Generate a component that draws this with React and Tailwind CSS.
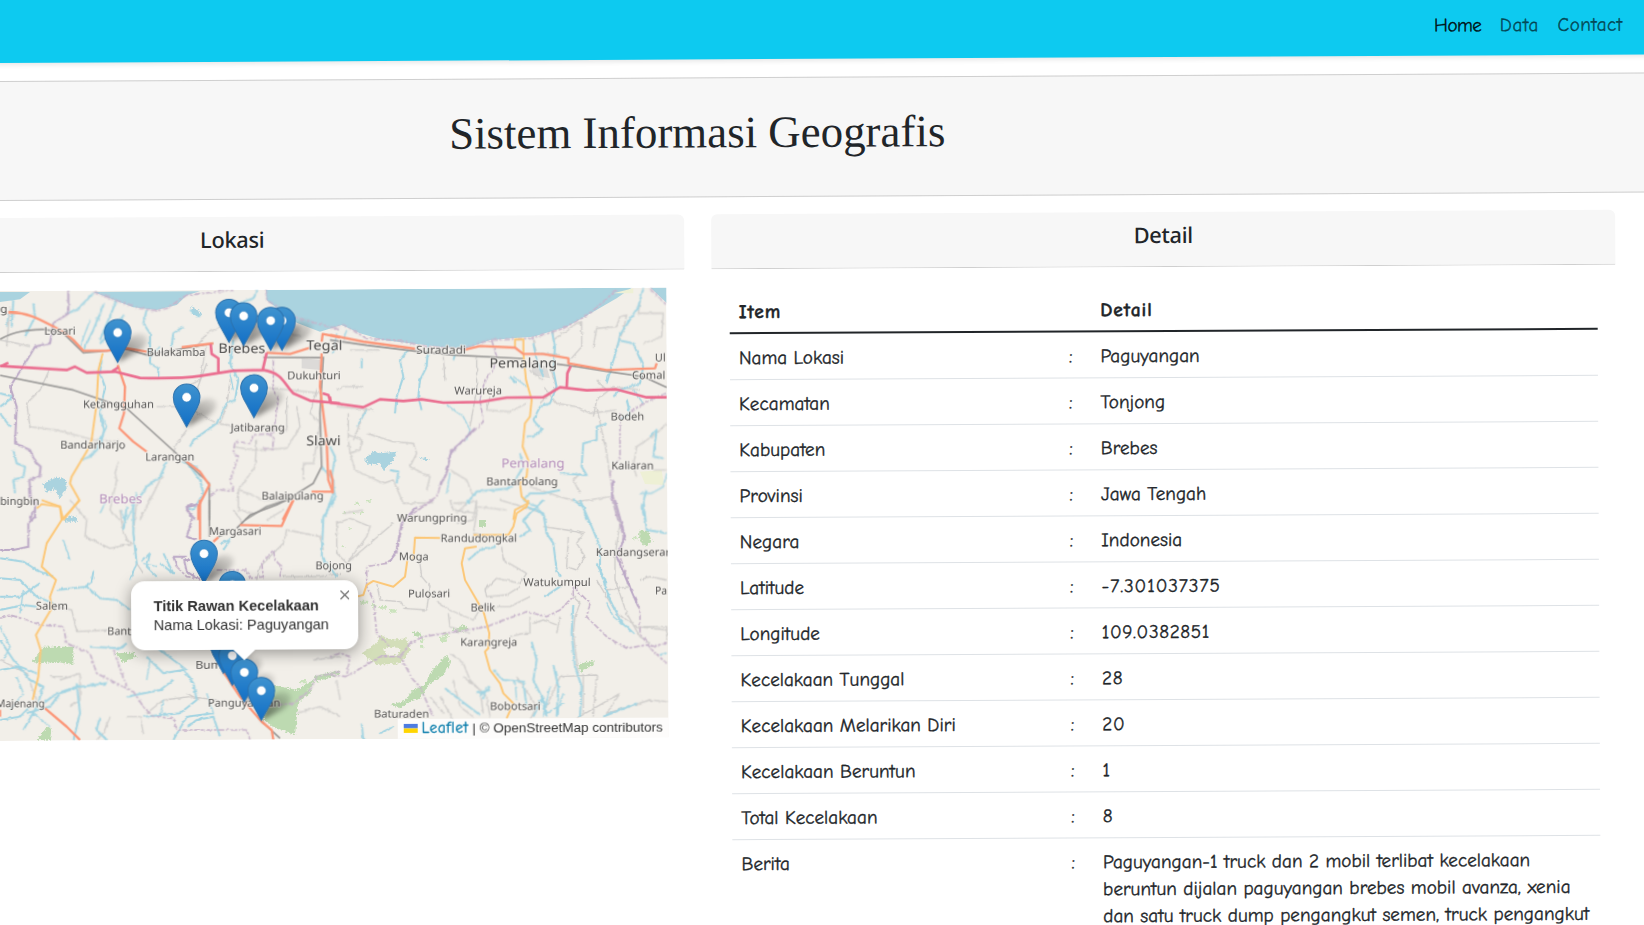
import React from "react";

const INK = "text-[#212529]";
const CASUAL_FONT = "font-['Comic_Sans_MS','Comic_Neue',cursive,sans-serif]";
const CASUAL = `${CASUAL_FONT} text-[19.2px] [-webkit-text-stroke:0.35px_currentColor]`;

const ROWS = [
  ["Nama Lokasi", "Paguyangan"],
  ["Kecamatan", "Tonjong"],
  ["Kabupaten", "Brebes"],
  ["Provinsi", "Jawa Tengah"],
  ["Negara", "Indonesia"],
  ["Latitude", "-7.301037375", "tracking-[0.9px]"],
  ["Longitude", "109.0382851", "tracking-[0.6px]"],
  ["Kecelakaan Tunggal", "28", "tracking-[0.6px]"],
  ["Kecelakaan Melarikan Diri", "20", "tracking-[0.6px]"],
  ["Kecelakaan Beruntun", "1"],
  ["Total Kecelakaan", "8"],
];

const NEWS = [
  "Paguyangan-1 truck dan 2 mobil terlibat kecelakaan",
  "beruntun dijalan paguyangan brebes mobil avanza, xenia",
  "dan satu truck dump pengangkut semen, truck pengangkut",
];

/* Line styles of the map: colour, width, dash */
const KINDS = {
  minor: ["#cfcdcb", 4, null],
  rail: ["#979695", 5, null],
  river: ["#a3d4e2", 6, null],
  thin: ["#a3d4e2", 4, null],
  border: ["#c6b3ca", 5, "18 5 8 5"],
  edge: ["#bba8c6", 6, null],
  second: ["#fcc777", 6, null],
  trunk: ["#fb9678", 7, null],
  toll: ["#ea6d8f", 8, null],
};

const NATURAL = ["minor", "river", "thin", "border", "edge"];

const NW = [
  ["minor", "M20 200L30 80M150 265L120 330 80 370 90 440 170 450 280 480 360 485M590 200L620 160 680 130M620 190L600 300 560 320M470 380L560 380 650 430 690 436M800 323L870 330 960 340M700 500L760 510 860 505 900 440 890 380M860 350V450L800 445 690 440M770 480L765 560 715 630 715 690 760 700M560 450L530 490 520 520M355 545L345 580 350 600 330 690 360 720M490 590L480 600 420 720M910 600L910 550 940 550 960 430 930 400 950 330M715 633L745 640 790 660 870 660M0 180L50 190 90 200M620 250L590 330 560 440M690 300L680 380 660 430M840 150L870 160 900 170"],
  ["rail", "M0 178C50 150 90 150 135 148L190 160 250 218 380 208 440 225 640 190M0 286L220 330 380 385 628 610V720M790 232L965 233M735 720L800 680 860 660 940 610 965 560 960 400 970 230"],
  ["river", "M280 40L230 90 200 100M312 70L280 150 250 210M350 60L300 180M372 105L340 150 300 190M440 90L430 130 450 160 450 250 475 265 475 290M305 240L300 280 315 320 300 400 312 450 300 500 270 530 240 540M0 340L40 350 0 380M0 400L30 440M40 510L50 550 75 560 70 590 40 600 45 640M700 180L690 250 715 300 705 360 680 370 650 430 580 480 570 500M770 30L760 55 690 80 650 120M805 55L830 80M500 545L480 590 440 620 420 650M560 545L600 600 610 640 580 690 560 680M965 560L1000 600 1000 640 975 710M40 60L35 140M100 70L105 110 75 170M550 140L520 160 515 200M570 90L600 110"],
  ["thin", "M300 400L320 440 290 500M25 100L20 140M270 120L240 200M690 280L700 330M480 200L450 230M545 545L590 560 600 590M410 640L400 680 380 720M375 720L360 690"],
  ["edge", "M205 30V100L160 130 150 190 105 200 75 250 30 320 50 380 45 490 90 510 105 545 122 560 118 590 88 600 92 650 105 680 90 720"],
  ["border", "M280 36L360 65 420 85 470 92 500 85 560 45 610 40 700 30M798 30L800 60 880 110 1020 150M820 240L820 330 835 360 820 460 760 465 750 490 705 485 700 520 715 530 690 600 700 630 650 630 630 650M800 460L820 470 818 508 790 505"],
  ["edge", "M600 675L565 675 560 690 585 718"],
  ["second", "M308 220L295 270 290 370 275 480 260 515 215 590 210 610 238 660 190 720M110 685L125 672 180 680 190 720"],
  ["trunk", "M25 98C90 95 130 125 190 155L220 180 250 212 320 212 380 205 440 215M353 255L375 320 372 400 358 445 400 485 440 515M545 202L640 190M800 218L870 222 930 203M965 220L960 320 980 480 985 600 998 635 935 635M965 185L968 162 1020 172M560 545L600 575 628 615 595 680V720M880 660L848 720"],
  ["toll", "M0 258L200 270 225 260 260 278 345 275 420 294C520 296 560 294 600 288L700 272 790 270C850 280 850 310 880 340L930 362 1020 370M632 192L635 222 655 235V278M800 218L788 270M0 260L25 248M335 275L355 262M968 340L985 345 992 365"],
];

const NE = [
  ["minor", "M20 380L130 390M20 330L40 320 100 320M55 400V480L60 520 75 570 160 610 190 600 220 670 310 668M110 380L70 480M55 465L95 480 90 510 60 520M110 460L190 485 250 490 260 520 240 560 300 590 290 630M340 230L345 300M440 230V330L420 440M480 350L470 390 540 395 590 370M640 320L680 370 740 380 780 400 860 390M670 150V180L740 130 755 125V200L720 240M790 200L800 145 860 140 870 110 890 105 880 150 860 200M930 65L925 100 1000 100 995 170 940 190M1010 430L980 460 920 500 910 560 920 590M600 620L690 650 740 665 840 650M360 570L410 600 430 650 380 700M370 670L440 665 440 700M440 680L530 690M660 260L680 320 630 370M800 380L830 520 840 590M600 270L640 300M150 210L60 210M40 700L100 690M610 180L620 220 690 225M750 640L730 600 750 580M800 300L830 330M790 410L800 360 850 320 930 330M970 570L1010 570"],
  ["rail", "M0 180L110 196 260 214 370 225 580 236M680 252L740 260 830 274 940 290 1010 322"],
  ["river", "M235 210L210 240 220 290 200 350 195 400M295 190L290 260 270 300 265 350 275 390M95 235V265M940 25L925 80 870 165 865 190 830 310M870 182L910 190 940 260 930 310 870 330 850 350M665 150L675 200 670 270 680 320 660 370 630 380 610 420 635 450 610 470 590 470M830 430L800 440 800 480 760 490 755 560 770 585 690 580M540 290L560 310M610 190L620 240 640 290M890 360L900 400 870 420M960 470L980 450 970 530 1000 535M540 625L440 635 410 670M570 520L580 560 550 610 530 630M690 630L640 640 600 640 580 660 620 680 650 720M180 570L205 575 200 610M770 720L760 680 730 660M950 630L935 680 945 720M375 225L370 240M0 500L15 530 5 590 15 650 5 680"],
  ["thin", "M350 375L400 410 420 450 410 480M110 390L80 440M20 160L10 220M50 150L40 180M550 290L590 320M360 580L350 640M1010 580L1000 620 965 640 930 640M910 330L940 370"],
  ["border", "M0 145L40 135 110 175 210 182 290 200 400 205 480 180 600 175 700 145 780 100 860 30M960 25L1010 75M485 180L500 230 490 270 465 300 450 360 460 425 435 450 390 490 365 510 350 580 330 620 320 650 260 690M1010 340L960 360 900 395M870 400L870 530 840 580 850 650 865 720"],
  ["edge", "M435 445L390 490 362 520 350 580 330 615M850 600L845 650 865 720"],
  ["second", "M555 200V178H580V220L588 300 605 360 600 410 585 430 578 500 595 540 590 590 570 610 575 650 595 670 555 690 550 720"],
  ["trunk", "M0 165L100 185 255 206M400 210L450 198 555 203 580 222 640 222 715 235 715 250 830 270 975 265 980 250M0 570L8 600V640"],
  ["toll", "M0 368L100 382 150 358 220 363 275 358 340 368 450 366 530 353 640 352 690 322 770 331 860 328 950 352H1010M710 325L712 280 722 258M0 350V368"],
];

const SW = [
  ["minor", "M210 0L260 60 255 110 330 145 400 130M360 30L370 100 390 130M410 0L400 100 410 190 430 220M860 90L960 110 970 150M860 90L850 130 780 200 770 240M170 320L215 330 230 395 330 390M800 60L850 30M150 530L200 530M180 540L240 520 240 600 210 620M440 640L490 600 570 590 650 600M330 650L310 700 290 720M0 480L80 520 110 600M380 650L420 650 430 700M560 580L600 600M850 230L960 230 1020 220M940 480L1020 470M890 640L960 620 1020 650M700 30L730 70"],
  ["rail", "M628 0V110M710 85L750 45 830 15 860 0M785 665L840 715M655 110L680 100"],
  ["river", "M0 175L70 185 110 210 160 230M0 235L60 240 110 290 160 310M0 290L60 290 120 250M0 330L70 315 110 320M170 270L260 260 300 295 350 300 390 330M280 215L275 245 250 265M380 20L370 90M400 0L400 100 410 190 390 240M425 185L450 160 440 200 470 230M490 160L520 220 480 190M0 420L40 480 90 540 130 560 110 620 70 690M0 510L60 500 110 520M440 470L490 520 550 510 580 550 590 600 540 640 430 650M80 640L150 620 180 580 240 560 320 550M230 550L240 640 220 720M230 560L170 580 130 610M640 640L560 650 520 720M300 650L290 690 320 720M1000 0L970 50 965 170 1010 230M560 680L590 660 640 650 660 710M270 440L360 445 380 430M440 430L480 450 560 510M0 660L60 650 90 620M380 590L480 570 520 540M660 130L690 120 670 150"],
  ["thin", "M0 380L30 440 10 480M50 530L70 580 30 630M490 600L480 650M620 580L640 640M320 0L300 40M450 480L440 540M70 270L60 340M190 120L210 180M470 200L430 190M150 680L100 640"],
  ["edge", "M105 0L105 50 85 70 85 140 40 150 0 150M590 15L560 20 575 60 560 110 590 120M530 200L520 170 560 170"],
  ["border", "M0 355L30 345 80 360 120 375 190 380 200 430 270 460 290 520 330 540 400 575 430 620 460 650 520 655 530 690 740 690M530 200L560 230 600 235M650 210L740 210 750 235 790 230 785 190 820 150 825 180 845 200 840 230M740 690L750 720M830 615L880 610 930 570 950 530 1020 515M340 450L380 560"],
  ["second", "M240 0L185 60 140 130 125 200 168 240 150 290 155 325 108 405 122 450 115 530 98 600M125 0L180 20 185 60"],
  ["trunk", "M600 0L600 120M880 0L845 78 720 75M655 112L640 125M135 625L200 680 240 720M670 515L720 590 785 665 815 690 820 720M0 630L0 650"],
  ["edge", "M570 180L552 180 560 215 600 240"],
];

const SE = [
  ["minor", "M20 70L60 55 120 80 110 110 50 190 20 160V70M50 190L190 70M360 0L370 30 440 40 430 100 490 110M440 0L430 60 380 70M270 190L275 230 300 260 290 330 220 325M140 250L150 300 210 305 220 320M320 305L360 330 430 360 455 320 540 320 600 290M515 140L520 180 590 220 570 250 500 235 465 270 470 290 530 285 570 260M640 80L710 90 760 100 740 130 765 170 740 210 710 200 715 110M730 290L750 310 735 350 730 400 745 520M800 240L860 340 920 380 1010 390M600 350V400L580 400 540 410M690 350L680 400M610 370L640 360 680 375M850 0L870 70 855 170 855 240 890 340 930 410 960 430M360 460L400 490 420 540 470 590 480 650M370 540L390 620 430 650M300 590L340 640M640 640L690 530 800 525 790 650M760 520V640M510 0L640 40M830 270L900 260M1010 240L960 230 930 240M20 540L30 600M940 380L1010 380 1010 420M560 530L620 620 600 660M740 655L870 580 830 640 960 600 1010 605M355 340L360 380 420 400M400 530L450 570 460 640M330 590L370 660"],
  ["river", "M640 0L580 60 600 90 570 110M500 140L450 150 415 180M590 20L640 40 650 100 670 130 680 210 690 230M690 260L645 290M750 0L785 80 810 140 810 210 840 300 870 360 910 400M940 0L950 90 1010 100M730 315L725 400 735 500 755 560 750 650M605 425L620 480 610 540 635 590 650 650M670 495L685 560 680 650M490 510L520 540 580 545 590 620M345 565L390 600 450 645M440 580L480 570M450 590L480 560M95 670L100 720M150 700L190 680M820 650L870 630 920 610M610 650L640 590 650 640M830 250L800 190M990 465L1010 460"],
  ["thin", "M640 590L610 630M660 560L640 650M470 560L460 600M555 545L560 600M700 580L680 640M410 0L420 10M830 310L850 350 900 390M650 640L700 610"],
  ["border", "M310 0L220 60 200 160 170 190 110 200 110 260 130 300 140 400 180 440M0 525L50 530 60 470 30 460 0 470M50 530L100 500 150 470 210 470 240 430 280 410 380 395 470 380 590 335 650 350 690 330 730 290 730 260M210 470L250 540 270 560 310 650M730 260L780 310 770 350 830 410 890 445 950 435 1010 490M850 0L880 110 870 170 900 260 930 330 930 400 960 440 1010 430"],
  ["edge", "M260 20L215 70 200 150 180 185M855 0L885 110 860 170 890 240 925 320"],
  ["second", "M595 0L590 20 560 40 550 80 535 105 430 105M330 114L255 113 250 180M232 180L225 230 190 260 130 243 110 255 100 285 80 290M440 140L405 145 395 190 405 240 440 300 462 340 478 400 475 445 465 455 480 510 510 550 520 580 550 610 530 655"],
];

const GREENS = [
  "M130 1100L220 1100V1155L170 1145 120 1150 95 1145ZM345 1120L400 1118 410 1130 370 1148ZM820 1215L890 1230 940 1200 930 1240 895 1265 885 1365 820 1340 790 1320ZM940 1190L1020 1170V1182L950 1205Z",
  "M110 1380L140 1340 155 1345 150 1380ZM1358 1048L1395 1034 1402 1045 1375 1060ZM1170 1275L1215 1262 1240 1230 1275 1215 1290 1180 1340 1125 1352 1150 1330 1185 1285 1215 1262 1255 1230 1265 1200 1285ZM1235 1055L1260 1058 1268 1072 1245 1068ZM1735 1152L1780 1140 1782 1155 1740 1175ZM1918 752L1945 752 1955 785 1935 800 1918 780ZM1437 720H1458V740H1437Z",
];

const WATERS = [
  "M0 36L90 36 60 58 0 66ZM280 36L600 34 560 46 530 75 470 90 400 82 330 55Z",
  "M798 30L1900 20 1850 55 1780 95 1700 140 1600 170 1470 180 1400 205 1330 202 1230 190 1150 180 1080 160 1025 135 960 155 890 128 800 60ZM1950 22H2010V78Z",
];

const LAKES =
  "M130 612L165 592 198 598 200 628 178 655 165 628 140 638ZM572 78L600 95 604 108 580 105ZM1092 540L1120 514 1140 520 1190 515 1178 545 1150 572 1140 550 1110 555ZM1260 536L1272 532 1292 540 1275 540ZM190 715L225 708 232 725 200 725Z";

/* x, baseline, drawn width, label, font size, colour */
const TOWN = "#555453";
const CITY = "#474645";
const REGION = "#b58fbb";
const PLACES = [
  [0, 98, 22, "g", 33, TOWN],
  [133, 164, 94, "Losari", 33, TOWN],
  [440, 228, 176, "Bulakamba", 33, TOWN],
  [655, 219, 141, "Brebes", 40, CITY],
  [919, 210, 108, "Tegal", 40, CITY],
  [862, 298, 160, "Dukuhturi", 33, TOWN],
  [249, 384, 213, "Ketangguhan", 33, TOWN],
  [692, 454, 163, "Jatibarang", 33, TOWN],
  [181, 506, 196, "Bandarharjo", 33, TOWN],
  [436, 542, 147, "Larangan", 33, TOWN],
  [919, 496, 103, "Slawi", 40, CITY],
  [297, 670, 130, "Brebes", 38, REGION],
  [785, 659, 186, "Balaipulang", 33, TOWN],
  [0, 675, 118, "bingbin", 33, TOWN],
  [1248, 221, 150, "Suradadi", 33, TOWN],
  [1468, 263, 203, "Pemalang", 40, CITY],
  [1363, 343, 143, "Warureja", 33, TOWN],
  [1965, 244, 32, "Ul", 33, TOWN],
  [1896, 297, 100, "Comal", 33, TOWN],
  [1832, 421, 101, "Bodeh", 33, TOWN],
  [1834, 568, 127, "Kaliaran", 33, TOWN],
  [1504, 563, 190, "Pemalang", 38, REGION],
  [1459, 616, 215, "Bantarbolang", 33, TOWN],
  [627, 765, 157, "Margasari", 33, TOWN],
  [946, 868, 110, "Bojong", 33, TOWN],
  [108, 989, 96, "Salem", 33, TOWN],
  [322, 1065, 90, "Banta", 33, TOWN],
  [586, 1166, 110, "Bumia", 33, TOWN],
  [624, 1280, 217, "Panguyangan", 33, TOWN],
  [-12, 1282, 146, "Majenang", 33, TOWN],
  [1191, 725, 210, "Warungpring", 33, TOWN],
  [1322, 786, 229, "Randudongkal", 33, TOWN],
  [1197, 841, 89, "Moga", 33, TOWN],
  [1788, 828, 222, "Kandangserar", 33, TOWN],
  [1570, 918, 202, "Watukumpul", 33, TOWN],
  [1965, 943, 36, "Pa", 33, TOWN],
  [1224, 952, 127, "Pulosari", 33, TOWN],
  [1412, 994, 74, "Belik", 33, TOWN],
  [1381, 1098, 171, "Karangreja", 33, TOWN],
  [1470, 1290, 152, "Bobotsari", 33, TOWN],
  [1122, 1313, 165, "Baturaden", 33, TOWN],
];

const PINS = [
  [353, 117],
  [687, 57],
  [846, 81],
  [731, 67],
  [812, 81],
  [762, 283],
  [560, 311],
  [612, 780],
  [697, 873],
  [670, 1050],
  [697, 1086],
  [733, 1136],
  [784, 1191],
];

const TILES = [
  [NW, 0, 0],
  [NE, 990, 0],
  [SW, 0, 660],
  [SE, 990, 660],
];

function Lines({ natural }) {
  return (
    <g fill="none" strokeLinejoin="round" filter={natural ? "url(#wander)" : undefined}>
      {TILES.map(([items, x, y]) => (
        <g key={`${x}-${y}`} transform={`translate(${x} ${y})`}>
          {items
            .filter(([kind]) => NATURAL.includes(kind) === natural)
            .map(([kind, d], i) => (
              <path
                key={i}
                d={d}
                stroke={KINDS[kind][0]}
                strokeWidth={KINDS[kind][1]}
                strokeDasharray={KINDS[kind][2] || undefined}
              />
            ))}
        </g>
      ))}
    </g>
  );
}

function MapDrawing() {
  return (
    <svg className="block h-full w-full" viewBox="-203 291 867.5 449.7" preserveAspectRatio="none">
      <defs>
        <linearGradient id="pin" x1="0" y1="0" x2="0" y2="1">
          <stop offset="0" stopColor="#3f93cf" />
          <stop offset="1" stopColor="#126fc6" />
        </linearGradient>
        <linearGradient id="cast" x1="0" y1="1" x2="0.7" y2="0">
          <stop offset="0" stopColor="#000" stopOpacity="0.55" />
          <stop offset="1" stopColor="#000" stopOpacity="0.12" />
        </linearGradient>
        <filter id="soft" x="-50%" y="-50%" width="200%" height="200%">
          <feGaussianBlur stdDeviation="8" />
        </filter>
        <filter id="wander" filterUnits="userSpaceOnUse" x="-60" y="0" width="2120" height="1420">
          <feTurbulence type="fractalNoise" baseFrequency="0.075" numOctaves="2" seed="4" />
          <feDisplacementMap in="SourceGraphic" scale="9" xChannelSelector="R" yChannelSelector="G" />
        </filter>
        <filter id="ragged" filterUnits="userSpaceOnUse" x="-60" y="0" width="2120" height="1420">
          <feTurbulence type="fractalNoise" baseFrequency="0.16" numOctaves="2" seed="9" />
          <feDisplacementMap in="SourceGraphic" scale="16" xChannelSelector="R" yChannelSelector="G" />
        </filter>
      </defs>
      <rect x="-203" y="291" width="868" height="450" fill="#f2efe9" />
      <g transform="rotate(0.295) translate(0 280) scale(0.33333)">
        {WATERS.map((d, i) => (
          <path key={i} d={d} fill="#aad3df" />
        ))}
        <g filter="url(#ragged)">
          <path d={LAKES} fill="#aad3df" />
          {GREENS.map((d, i) => (
            <path key={i} d={d} fill="#bddab1" />
          ))}
          <path
            d="M1085 1120L1130 1090 1140 1065 1170 1080 1220 1075 1232 1110 1200 1150 1130 1155ZM1150 1110L1165 1128 1195 1125 1200 1105 1170 1100Z"
            fill="#d3deb9"
            fillRule="evenodd"
          />
          <g fill="#cbe3bd">
            <path d="M1065 668h12v6h-12zM1098 660h14v7h-14zM1058 696h8v6h-8zM1080 694h10v8h-10zM1030 695h8v6h-8zM1045 742h8v6h-8zM1025 796h8v6h-8z" />
            <path d="M900 1200h20v10h-20zM920 1225h14v8h-14zM1260 1095h10v8h-10zM1320 1070h20v16h-20z" />
            <path d="M1082 962h22v9h-22zM1112 972h14v8h-14zM1135 978h26v8h-26zM1170 988h20v10h-20zM1262 1075h8v14h-8zM1330 1060h16v8h-16zM1900 770h10v8h-10z" />
          </g>
        </g>
        <path d="M1920 575L1985 570 1992 615 1935 612ZM1840 40L1900 25 1900 40Z" fill="#eef0d5" />
        <path d="M905 235L960 240 960 270 905 265ZM1590 245L1640 260 1650 295 1600 285Z" fill="#dcdad8" />
        <Lines natural={true} />
        <Lines natural={false} />
        <g
          fontFamily="Noto Sans, Open Sans, sans-serif"
          stroke="#f4f2ed"
          strokeOpacity="0.75"
          strokeWidth="6"
          strokeLinejoin="round"
          paintOrder="stroke"
        >
          {PLACES.map(([x, y, w, name, size, fill]) => (
            <text
              key={name + x}
              x={x}
              y={y}
              fontSize={size}
              fill={fill}
              textLength={w}
              lengthAdjust="spacingAndGlyphs"
            >
              {name}
            </text>
          ))}
        </g>
        {PINS.map(([x, y]) => (
          <path
            key={`s${x}-${y}`}
            transform={`translate(${x} ${y})`}
            d="M0 130L20 70Q56 32 84 50Q100 72 62 98Z"
            fill="url(#cast)"
            filter="url(#soft)"
          />
        ))}
        {PINS.map(([x, y]) => (
          <g key={`p${x}-${y}`} transform={`translate(${x} ${y})`}>
            <path
              d="M0 130L-31 74Q-40 58-40 41A40 40 0 0 1 40 41Q40 58 31 74Z"
              fill="url(#pin)"
              stroke="#2c72ad"
              strokeWidth="3"
            />
            <circle cx="0" cy="41" r="14" fill="#fff" stroke="#2a78b8" strokeWidth="1.5" />
          </g>
        ))}
      </g>
    </svg>
  );
}

function Popup() {
  return (
    <div className="absolute left-[330.5px] top-[290.5px] h-[69px] w-[227.5px] rounded-[13.5px] bg-white font-['Liberation_Sans',Arial,sans-serif] text-[14.6px] leading-[19px] text-[#333] shadow-[0_3px_16px_rgba(0,0,0,0.4)]">
      <div className="pl-[23px] pt-[16.5px]">
        <b className="block whitespace-nowrap">Titik Rawan Kecelakaan</b>
        <span className="block whitespace-nowrap">Nama Lokasi: Paguyangan</span>
      </div>
      <svg className="absolute left-[209px] top-[10.5px] h-[9.5px] w-[9.5px]" viewBox="0 0 10 10">
        <path d="M0.5 0.5L9.5 9.5M9.5 0.5L0.5 9.5" stroke="#757575" strokeWidth="1.4" />
      </svg>
      <svg className="absolute left-[101.5px] top-[68.5px] h-[12px] w-[24px]" viewBox="0 0 24 12">
        <path d="M0 0H24L12 11.5Z" fill="#fff" />
      </svg>
    </div>
  );
}

function Attribution() {
  return (
    <div className="absolute bottom-0 right-0 flex h-[20px] items-center whitespace-pre bg-white/80 pl-[5.5px] pr-[5.5px] font-['Liberation_Sans',Arial,sans-serif] text-[13.5px] text-[#333]">
      <svg className="mr-[4px] h-[9px] w-[14px]" viewBox="0 0 14 9">
        <path fill="#4c7be1" d="M0 0h14v4.5H0z" />
        <path fill="#ffd500" d="M0 4.5h14V9H0z" />
      </svg>
      <span
        className={`${CASUAL_FONT} text-[15.5px] tracking-[0.55px] text-[#0078a8] [-webkit-text-stroke:0.3px_currentColor]`}
      >
        Leaflet
      </span>
      <span> | © OpenStreetMap contributors</span>
    </div>
  );
}

function CardHeader({ children }) {
  return (
    <div className="flex h-[55px] items-center justify-center rounded-t-[6px] border-b border-[#cfcfcf] bg-[#f7f7f7] pb-[8px] font-['Noto_Sans','Open_Sans',sans-serif] text-[21.8px] font-medium tracking-[-0.3px]">
      {children}
    </div>
  );
}

export default function App() {
  return (
    <div className={`h-[925px] w-[1644px] overflow-hidden bg-white ${INK}`}>
      <div className="-ml-[255px] w-[1903px] origin-[255px_0px] rotate-[-0.295deg]">
        <nav
          className={`relative flex h-[63px] items-center justify-end gap-[18.5px] bg-[#0dcaf0] pr-[25.5px] pt-[4px] shadow-[0_2px_5px_rgba(0,0,0,0.1)] ${CASUAL}`}
        >
          <a className="tracking-[-0.6px] text-black/90">Home</a>
          <a className="tracking-[0.6px] text-black/60">Data</a>
          <a className="tracking-[0.45px] text-black/60">Contact</a>
        </nav>
        <header className="mt-[18px] flex h-[119.5px] items-center justify-center border-y border-[#cfcfcf] bg-[#f7f7f7] pb-[9px]">
          <h1 className="font-['Liberation_Serif','Times_New_Roman',serif] text-[44.9px] leading-none">
            Sistem Informasi Geografis
          </h1>
        </header>
        <main className="mt-[17.5px] flex gap-[27px] pl-[34px]">
          <section className="w-[904px] shrink-0">
            <CardHeader>Lokasi</CardHeader>
            <div className="px-[18px] pt-[18px]">
              <div className="relative h-[449.7px] w-[867.5px] overflow-hidden">
                <MapDrawing />
                <Popup />
                <Attribution />
              </div>
            </div>
          </section>
          <section className="w-[904px] shrink-0">
            <CardHeader>Detail</CardHeader>
            <div className={`px-[18px] pt-[18px] ${CASUAL}`}>
              <div className="grid h-[46.5px] grid-cols-[330px_31.5px_1fr] items-center border-b-2 border-[#212529] pt-[4px] text-[19.6px] font-bold tracking-[0.9px] [&>*]:px-[9px]">
                <span>Item</span>
                <span />
                <span>Detail</span>
              </div>
              {ROWS.map(([item, value, tracking]) => (
                <div
                  key={item}
                  className="grid h-[46px] grid-cols-[330px_31.5px_1fr] items-center border-b border-[#dee2e6] pt-[4px] [&>*]:px-[9px]"
                >
                  <span>{item}</span>
                  <span>:</span>
                  <span className={tracking}>{value}</span>
                </div>
              ))}
              <div className="grid grid-cols-[330px_31.5px_1fr] pt-[11px] leading-[27px] [&>*]:px-[9px]">
                <span>Berita</span>
                <span>:</span>
                <div className="whitespace-nowrap">
                  {NEWS.map((line) => (
                    <p key={line}>{line}</p>
                  ))}
                </div>
              </div>
            </div>
          </section>
        </main>
      </div>
    </div>
  );
}
